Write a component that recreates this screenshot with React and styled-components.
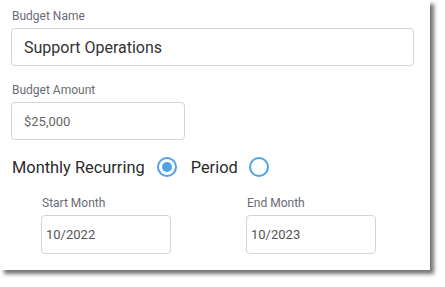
import React from "react";
import styled, { createGlobalStyle } from "styled-components";

const Global = createGlobalStyle`
  html, body { margin: 0; padding: 0; background: #fff; }
  body { font-family: Roboto, "Liberation Sans", sans-serif; }
`;

const Page = styled.div`
  width: 445px;
  height: 287px;
  background: #fff;
  overflow: hidden;
`;

const Card = styled.div`
  width: 430px;
  height: 270px;
  background: #fff;
  box-shadow: 4px 4px 4px rgba(0, 0, 0, 0.55);
  box-sizing: border-box;
  padding: 9px 0 0 11px;
  display: flex;
  flex-direction: column;
`;

const Field = styled.div`
  display: flex;
  flex-direction: column;
  margin-bottom: ${(p) => p.$mb || 0}px;
`;

const Label = styled.label`
  font-size: 12px;
  line-height: 14px;
  color: #6b6b75;
  margin-left: 1px;
  margin-bottom: 5px;
`;

const Input = styled.div`
  box-sizing: border-box;
  width: ${(p) => p.$w}px;
  height: ${(p) => p.$h}px;
  border: 1px solid #d4d4d4;
  border-radius: 4px;
  padding-left: ${(p) => p.$pl}px;
  display: flex;
  align-items: center;
  font-size: ${(p) => p.$fs}px;
  color: ${(p) => p.$color};
`;

const RadioRow = styled.div`
  display: flex;
  align-items: center;
  height: 24px;
  margin-top: 15px;
  margin-left: 1px;
  margin-bottom: 17px;
`;

const RadioText = styled.span`
  font-size: 16.4px;
  color: #2b2b2b;
  margin-right: ${(p) => p.$mr}px;
`;

const Radio = styled.span`
  box-sizing: border-box;
  width: 20px;
  height: 20px;
  border-radius: 50%;
  border: 2px solid #4ea3e6;
  display: inline-flex;
  align-items: center;
  justify-content: center;
  margin-right: ${(p) => p.$mr || 0}px;
  &::after {
    content: "";
    display: ${(p) => (p.$checked ? "block" : "none")};
    width: 10px;
    height: 10px;
    border-radius: 50%;
    background: #4ea3e6;
  }
`;

const MonthRow = styled.div`
  display: flex;
  margin-left: 30px;
  gap: 75px;
`;

export default function App() {
  return (
    <Page>
      <Global />
      <Card>
        <Field $mb={17}>
          <Label>Budget Name</Label>
          <Input $w={403} $h={38} $pl={12} $fs={16} $color="#333">
            Support Operations
          </Input>
        </Field>
        <Field>
          <Label>Budget Amount</Label>
          <Input $w={174} $h={38} $pl={12} $fs={13} $color="#666">
            $25,000
          </Input>
        </Field>
        <RadioRow>
          <RadioText $mr={12}>Monthly Recurring</RadioText>
          <Radio $checked $mr={14} />
          <RadioText $mr={11}>Period</RadioText>
          <Radio />
        </RadioRow>
        <MonthRow>
          <Field>
            <Label>Start Month</Label>
            <Input $w={130} $h={39} $pl={4} $fs={13} $color="#555">
              10/2022
            </Input>
          </Field>
          <Field>
            <Label>End Month</Label>
            <Input $w={130} $h={39} $pl={4} $fs={13} $color="#555">
              10/2023
            </Input>
          </Field>
        </MonthRow>
      </Card>
    </Page>
  );
}
